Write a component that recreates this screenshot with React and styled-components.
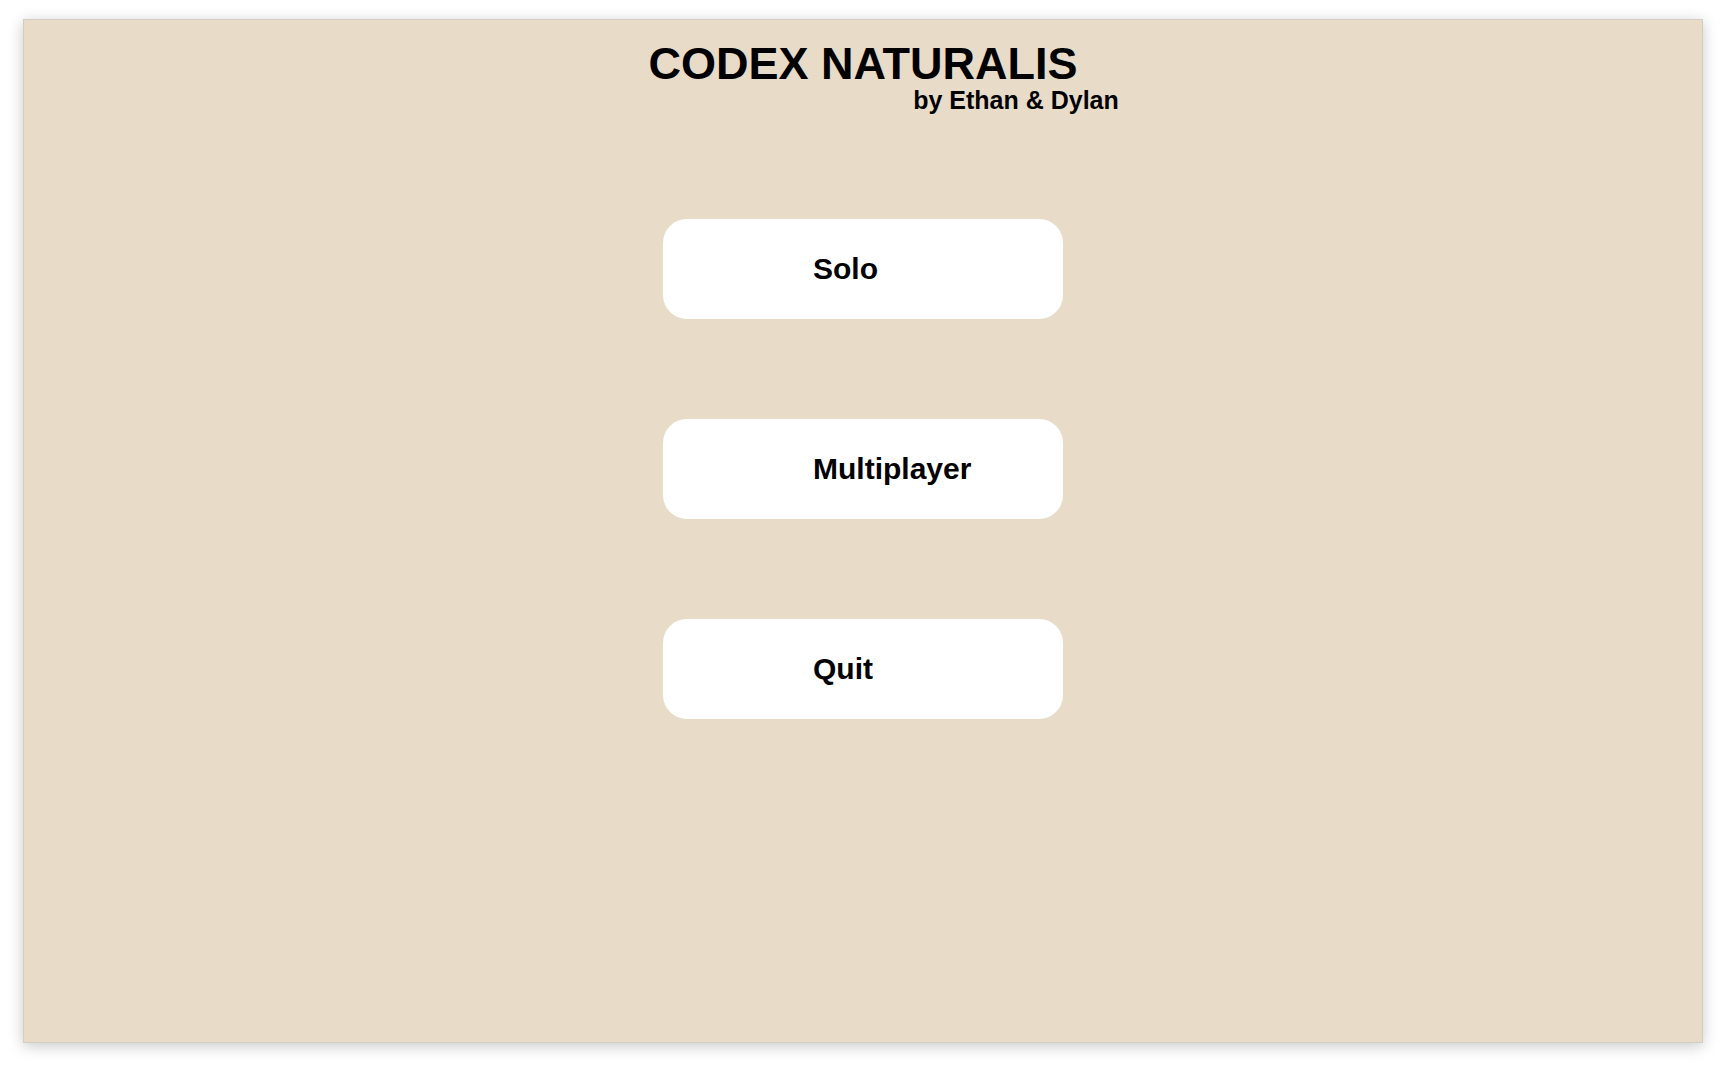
import React from "react";
import styled, { createGlobalStyle } from "styled-components";

const GlobalStyle = createGlobalStyle`
  body {
    margin: 0;
    background: #ffffff;
    font-family: "Liberation Sans", Arial, sans-serif;
  }
`;

const Page = styled.div`
  padding: 19px 23px 28px;
`;

const Window = styled.div`
  box-sizing: border-box;
  width: 1680px;
  height: 1024px;
  background: #e8dcc9;
  border: 1px solid #d3cdc3;
  box-shadow: 0 3px 14px rgba(0, 0, 0, 0.22);
  display: flex;
  flex-direction: column;
  align-items: center;
  padding-top: 21px;
`;

const Title = styled.h1`
  margin: 0;
  font-size: 45px;
  line-height: 46px;
  font-weight: 700;
  color: #000;
`;

const Subtitle = styled.div`
  margin: 1px 0 0 306px;
  font-size: 25px;
  line-height: 25px;
  font-weight: 700;
  color: #000;
`;

const Menu = styled.div`
  display: flex;
  flex-direction: column;
  gap: 100px;
  margin-top: 106px;
`;

const MenuButton = styled.button`
  box-sizing: border-box;
  width: 400px;
  height: 100px;
  padding: 0 0 0 150px;
  border: none;
  border-radius: 24px;
  background: #ffffff;
  font-family: "Liberation Sans", Arial, sans-serif;
  font-size: 30px;
  font-weight: 700;
  color: #000;
  text-align: left;
  cursor: pointer;
`;

const App = () => {
  return (
    <Page>
      <GlobalStyle />
      <Window>
        <Title>CODEX NATURALIS</Title>
        <Subtitle>by Ethan &amp; Dylan</Subtitle>
        <Menu>
          <MenuButton>Solo</MenuButton>
          <MenuButton>Multiplayer</MenuButton>
          <MenuButton>Quit</MenuButton>
        </Menu>
      </Window>
    </Page>
  );
};

export default App;
